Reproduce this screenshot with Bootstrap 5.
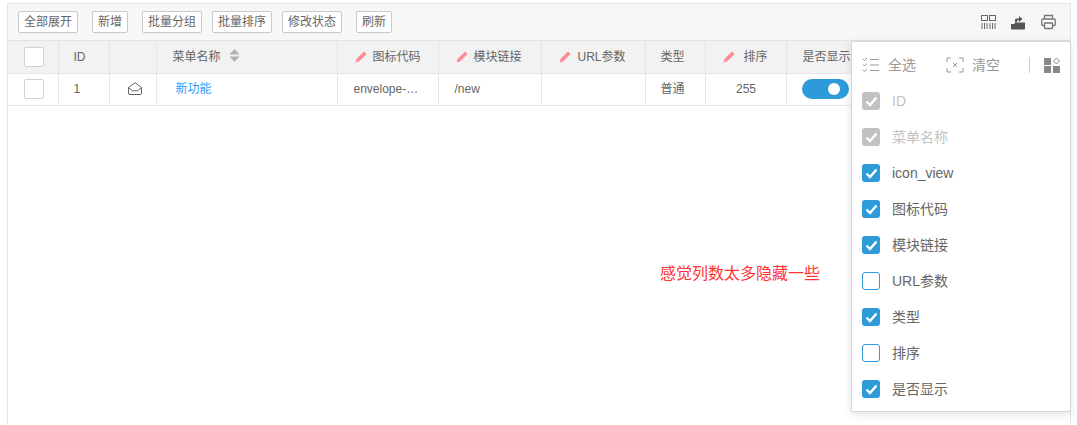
<!DOCTYPE html>
<html lang="zh">
<head>
<meta charset="utf-8">
<title>菜单</title>
<link href="https://cdn.jsdelivr.net/npm/bootstrap@5.3.0/dist/css/bootstrap.min.css" rel="stylesheet">
<style>
html,body{height:100%;overflow:hidden}
body{background:#fff;font-family:"Liberation Sans","Noto Sans CJK SC",sans-serif;font-size:12px;color:#666}
.stage{position:relative;height:425px;padding:3px 6px 0 7px;overflow:hidden}
.frame{height:422px;border:1px solid #e6e6e6;border-bottom:0}
.tbar{height:37px;background:#f7f7f7;padding:7px 10px 0;border-bottom:1px solid #e2e2e2;align-items:flex-start}
.tbtn{height:22px;line-height:20px;padding:0 5px;border:1px solid #c9c9c9;border-radius:2px;background:#fff;color:#666;font-size:12px;white-space:nowrap;margin-right:14px}
.tbtn.tight{margin-right:10px}
.tools{margin-left:auto;gap:16px;padding:3px 4px 0 0}
.tools svg{display:block}
.tools svg:first-child{margin-right:-1px}
.grid{table-layout:fixed;width:1062px;border-collapse:collapse;margin:0}
.grid th,.grid td{height:32px;padding:0 15px 0 16px;border:1px solid #e6e6e6;border-top:0;font-weight:400;color:#666;font-size:12px;text-align:left;white-space:nowrap;overflow:hidden;vertical-align:middle}
.grid tr>:first-child{border-left:0}
.grid thead th{background:#f2f2f2}
.grid .ctr{text-align:center}
.grid .pad{padding-left:17px;padding-right:0}
.grid .nar{padding-left:15px}
.c1{width:50px}.c2{width:51px}.c3{width:47px}.c4{width:181px}.c5{width:101px}.c6{width:103px}.c7{width:104px}.c8{width:60px}.c9{width:81px}.c10{width:284px}
.box{display:block;width:20px;height:20px;border:1px solid #d2d2d2;border-radius:2px;background:#fff;margin:0 auto}
.pen{display:inline-block;vertical-align:-2px;margin-right:6px}
.pen.mid{margin-right:7px}
.pen.wide{margin-right:9px}
.sort{display:inline-block;vertical-align:-1px;margin-left:8px}
.lnk{color:#1e9fff;text-decoration:none;margin-left:3px}
.env{display:block;margin-left:2px;margin-top:-1px}
.tog{width:47px;height:20px;border-radius:10px;background:#2d9ad9;position:relative}
.tog::after{content:"";position:absolute;right:9px;top:4px;width:12px;height:12px;border-radius:50%;background:#fff}
.note{position:absolute;left:660px;top:264px;color:#f33;font-size:16px;line-height:20px;white-space:nowrap}
.panel{position:absolute;left:851px;top:41px;width:220px;height:371px;background:#fff;border:1px solid #d7d7d7;border-radius:2px;box-shadow:0 2px 8px rgba(0,0,0,.12);color:#666;font-size:14px}
.phead{height:45px;padding:0 0 0 10px;align-items:center;color:#999}
.phead span{line-height:20px}
.ic1{margin-right:8px}
.ic2{margin-left:30px;margin-right:8px}
.vb{width:1px;height:16px;background:#ccc;margin:0 0 0 29px}
.ic3{margin-left:14px}
.opt{height:36px;padding-left:10px;align-items:center}
.opt.first{margin-top:-4px}
.cb{width:18px;height:18px;border-radius:3px;margin-right:12px;flex:none;display:flex;align-items:center;justify-content:center}
.cb.on{background:#2d9ad9}
.cb.off{border:1px solid #2d9ad9;background:#fff}
.cb.dis{background:#c2c2c2}
.opt.dim{color:#c2c2c2}
</style>
</head>
<body>
<svg width="0" height="0" class="d-none">
  <symbol id="pen" viewBox="0 0 12 12"><path d="M9 .5l2.500 2.500-7.500 7.500-3.500 1 1-3.500z" fill="#ff8a96"/></symbol>
  <symbol id="tick" viewBox="0 0 13 11"><path d="M1.500 5.500l3.500 3.500 6.500-7.500" fill="none" stroke="#fff" stroke-width="2.400"/></symbol>
</svg>
<div class="stage">
  <div class="frame">
    <div class="tbar d-flex">
      <button class="tbtn" type="button">全部展开</button>
      <button class="tbtn" type="button">新增</button>
      <button class="tbtn tight" type="button">批量分组</button>
      <button class="tbtn tight" type="button">批量排序</button>
      <button class="tbtn" type="button">修改状态</button>
      <button class="tbtn" type="button">刷新</button>
      <div class="tools d-flex">
        <svg width="15" height="16" viewBox="0 0 15 16" fill="none" stroke="#666" stroke-width="1"><rect x=".5" y="1.500" width="6" height="5"/><rect x="8.500" y="1.500" width="6" height="5"/><path d="M1 9v6M3.500 9v6M6 9v6M9 9v6M11.500 9v6M14 9v6"/></svg>
        <svg width="14" height="16" viewBox="0 0 14 16"><path d="M0 10h3l1.500-1.500H14v6a1 1 0 0 1-1 1H1a1 1 0 0 1-1-1z" fill="#555"/><path d="M4 8.500V6q0-1.500 1.500-1.500H8V2l3.500 3L8 8V6.500H6v2z" fill="#555"/></svg>
        <svg width="15" height="16" viewBox="0 0 15 16" fill="none" stroke="#777" stroke-width="1.300"><path d="M3.500 5V1.500h8V5"/><path d="M3 11.500H2a1.300 1.300 0 0 1-1.300-1.300V6.300A1.300 1.300 0 0 1 2 5h11a1.300 1.300 0 0 1 1.300 1.300v3.900a1.300 1.300 0 0 1-1.300 1.300h-1"/><rect x="3.500" y="9" width="8" height="5.500" rx=".5"/></svg>
      </div>
    </div>
    <table class="grid">
      <colgroup><col class="c1"><col class="c2"><col class="c3"><col class="c4"><col class="c5"><col class="c6"><col class="c7"><col class="c8"><col class="c9"><col class="c10"></colgroup>
      <thead>
        <tr>
          <th class="ctr"><span class="box"></span></th>
          <th class="nar">ID</th>
          <th></th>
          <th>菜单名称<svg class="sort" width="11" height="13" viewBox="0 0 11 13" fill="#b2b2b2"><path d="M5.500 0l5 5.500H.5zM5.500 13l5-5.500H.5z"/></svg></th>
          <th class="pad"><svg class="pen" width="12" height="12"><use href="#pen"/></svg>图标代码</th>
          <th class="pad"><svg class="pen" width="12" height="12"><use href="#pen"/></svg>模块链接</th>
          <th class="pad"><svg class="pen mid" width="12" height="12"><use href="#pen"/></svg>URL参数</th>
          <th class="nar">类型</th>
          <th class="pad"><svg class="pen wide" width="12" height="12"><use href="#pen"/></svg>排序</th>
          <th>是否显示</th>
        </tr>
      </thead>
      <tbody>
        <tr>
          <td class="ctr"><span class="box"></span></td>
          <td class="nar">1</td>
          <td><svg class="env" width="14" height="13" viewBox="0 0 14 13" fill="none" stroke="#666" stroke-width="1"><path d="M.5 5.500L7 .7l6.500 4.800V11a1.500 1.500 0 0 1-1.500 1.500H2A1.500 1.500 0 0 1 .5 11z"/><path d="M.5 5.500l4 3.300h5l4-3.300"/></svg></td>
          <td><a class="lnk" href="#">新功能</a></td>
          <td>envelope-…</td>
          <td>/new</td>
          <td></td>
          <td class="nar">普通</td>
          <td class="ctr">255</td>
          <td class="nar"><div class="tog"></div></td>
        </tr>
      </tbody>
    </table>
  </div>
  <div class="note">感觉列数太多隐藏一些</div>
  <div class="panel">
    <div class="phead d-flex">
      <svg class="ic1" width="18" height="16" viewBox="0 0 18 16" fill="none" stroke="#999" stroke-width="1"><path d="M1 2l1.500 1.500L5 1M1 7.500l1.500 1.500L5 6.500M1 13l1.500 1.500L5 12M8 2.500h9M8 8h9M8 13.500h9"/></svg>
      <span>全选</span>
      <svg class="ic2" width="18" height="16" viewBox="0 0 18 16" fill="none" stroke="#999" stroke-width="1"><path d="M1 5V1h4M13 1h4v4M17 11v4h-4M5 15H1v-4M7 6l4 4M11 6l-4 4"/></svg>
      <span>清空</span>
      <div class="vb"></div>
      <svg class="ic3" width="16" height="16" viewBox="0 0 16 16" fill="#888"><rect x="0" y="1" width="7" height="7"/><rect x="0" y="9" width="7" height="7"/><rect x="9" y="9" width="7" height="7"/><path d="M12.500 1l3 3-3 3-3-3z" fill="none" stroke="#888"/></svg>
    </div>
    <div class="opt first dim d-flex"><span class="cb dis"><svg width="13" height="11"><use href="#tick"/></svg></span>ID</div>
    <div class="opt dim d-flex"><span class="cb dis"><svg width="13" height="11"><use href="#tick"/></svg></span>菜单名称</div>
    <div class="opt d-flex"><span class="cb on"><svg width="13" height="11"><use href="#tick"/></svg></span>icon_view</div>
    <div class="opt d-flex"><span class="cb on"><svg width="13" height="11"><use href="#tick"/></svg></span>图标代码</div>
    <div class="opt d-flex"><span class="cb on"><svg width="13" height="11"><use href="#tick"/></svg></span>模块链接</div>
    <div class="opt d-flex"><span class="cb off"></span>URL参数</div>
    <div class="opt d-flex"><span class="cb on"><svg width="13" height="11"><use href="#tick"/></svg></span>类型</div>
    <div class="opt d-flex"><span class="cb off"></span>排序</div>
    <div class="opt d-flex"><span class="cb on"><svg width="13" height="11"><use href="#tick"/></svg></span>是否显示</div>
  </div>
</div>
</body>
</html>
